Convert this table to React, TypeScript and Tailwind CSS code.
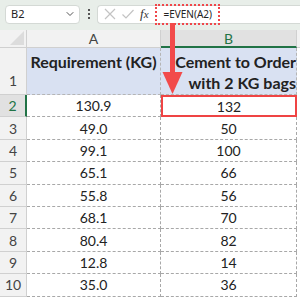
import { ChevronDown } from 'lucide-react';

const rows: [string, string][] = [
  ['130.9', '132'],
  ['49.0', '50'],
  ['99.1', '100'],
  ['65.1', '66'],
  ['55.8', '56'],
  ['68.1', '70'],
  ['80.4', '82'],
  ['12.8', '14'],
  ['35.0', '36'],
];

const cellFont = { fontFamily: 'Lato, "Liberation Sans", sans-serif' };

function FormulaBar() {
  return (
    <div className="flex h-[28px] items-center bg-[#e8eee9] pl-[5px]">
      <div className="flex h-[19px] w-[75px] items-center justify-between rounded-[4px] border border-[#d4d9d5] bg-white pl-[5px] pr-[3px] text-[11px] text-[#222]">
        <span>B2</span>
        <ChevronDown className="h-[12px] w-[12px] text-[#555]" strokeWidth={2} />
      </div>
      <div className="flex w-[17px] flex-col items-center gap-[2px]">
        <span className="h-[2px] w-[2px] bg-[#555]" />
        <span className="h-[2px] w-[2px] bg-[#555]" />
        <span className="h-[2px] w-[2px] bg-[#555]" />
      </div>
      <div className="flex h-[19px] flex-1 items-center rounded-l-[4px] border border-r-0 border-[#d4d9d5] bg-white pl-[5px]">
        <svg width="14" height="14" viewBox="0 0 14 14" className="mr-[4px]">
          <path d="M2 2 L12 12 M12 2 L2 12" stroke="#c3c3c3" strokeWidth="1.2" />
        </svg>
        <svg width="14" height="14" viewBox="0 0 14 14" className="mr-[5px]">
          <path d="M1.5 7.5 L5 11 L12.5 3" stroke="#c3c3c3" strokeWidth="1.2" fill="none" />
        </svg>
        <span className="text-[13px] italic text-[#333]" style={{ fontFamily: '"Liberation Serif", serif' }}>
          f<span className="text-[11px]">x</span>
        </span>
        <div className="ml-[6px] flex h-[21px] items-center border-2 border-dotted border-[#f0464a] pl-[7px] pr-[6px] text-[10px] text-[#222]">
          =EVEN(A2)
        </div>
      </div>
    </div>
  );
}

export default function App() {
  return (
    <div className="relative h-[300px] w-[300px] overflow-hidden bg-white text-[#222]" style={{ fontFamily: '"Noto Sans", sans-serif' }}>
      <FormulaBar />
      <div className="h-[2px] bg-[#e8eee9]" />
      <div className="grid grid-cols-[27px_134px_136px_3px]" style={cellFont}>
        {/* column headers */}
        <div className="flex h-[18px] items-end justify-end border-b border-r border-[#d0d0d0] bg-[#f2f2f2] pb-[2px] pr-[2px]">
          <div className="h-0 w-0 border-b-[14px] border-l-[14px] border-b-[#dcdcdc] border-l-transparent" />
        </div>
        <div className="flex h-[18px] items-center justify-center border-b border-r border-[#d0d0d0] bg-[#f2f2f2] text-[14px] text-[#444]">
          A
        </div>
        <div className="flex h-[18px] items-center justify-center border-b-2 border-r border-b-[#217346] border-r-[#d0d0d0] bg-[#e1e1e1] text-[14px] text-[#217346]">
          B
        </div>
        <div className="h-[18px] border-b border-[#d0d0d0] bg-[#f2f2f2]" />

        {/* row 1 */}
        <div className="flex h-[47px] items-end justify-center border-b border-r border-[#d0d0d0] bg-[#f2f2f2] pb-[3px] text-[14px] text-[#444]">
          1
        </div>
        <div className="flex h-[47px] items-start justify-center border-b border-r border-dashed border-[#b5b5b5] bg-[#d9e1f2] pt-[3px] text-[16px] leading-[21px] font-bold whitespace-nowrap">
          Requirement (KG)
        </div>
        <div className="flex h-[47px] flex-col items-end border-b border-r border-dashed border-[#b5b5b5] bg-[#d9e1f2] pt-[3px] text-right text-[16px] leading-[21px] font-bold whitespace-nowrap">
          <span>Cement to Order</span>
          <span>with 2 KG bags</span>
        </div>
        <div className="h-[47px]" />

        {rows.map(([a, b], i) => {
          const sel = i === 0;
          return (
            <div key={i} className="contents">
              <div
                className={
                  sel
                    ? 'flex h-[22.4px] items-center justify-center border-b border-r-2 border-b-[#d0d0d0] border-r-[#217346] bg-[#e1e1e1] text-[14px] text-[#217346]'
                    : 'flex h-[22.4px] items-center justify-center border-b border-r border-[#d0d0d0] bg-[#f2f2f2] text-[14px] text-[#444]'
                }
              >
                {i + 2}
              </div>
              <div className="flex h-[22.4px] items-center justify-center border-b border-r border-dashed border-[#a8a8a8] text-[14px]">
                {a}
              </div>
              <div
                className={
                  sel
                    ? 'flex h-[22.4px] items-center justify-center border-[2.5px] border-[#ef4444] text-[14px]'
                    : 'flex h-[22.4px] items-center justify-center border-b border-r border-dashed border-[#a8a8a8] text-[14px]'
                }
              >
                {b}
              </div>
              <div className="h-[22.4px]" />
            </div>
          );
        })}
      </div>

      {/* arrow from formula to B2 */}
      <svg className="absolute left-[160px] top-[23px]" width="26" height="72" viewBox="0 0 26 72">
        <rect x="10" y="0" width="5" height="51" fill="#f24a4a" />
        <path d="M2.5 49 L22.5 49 L12.5 71 Z" fill="#f24a4a" />
      </svg>
    </div>
  );
}
